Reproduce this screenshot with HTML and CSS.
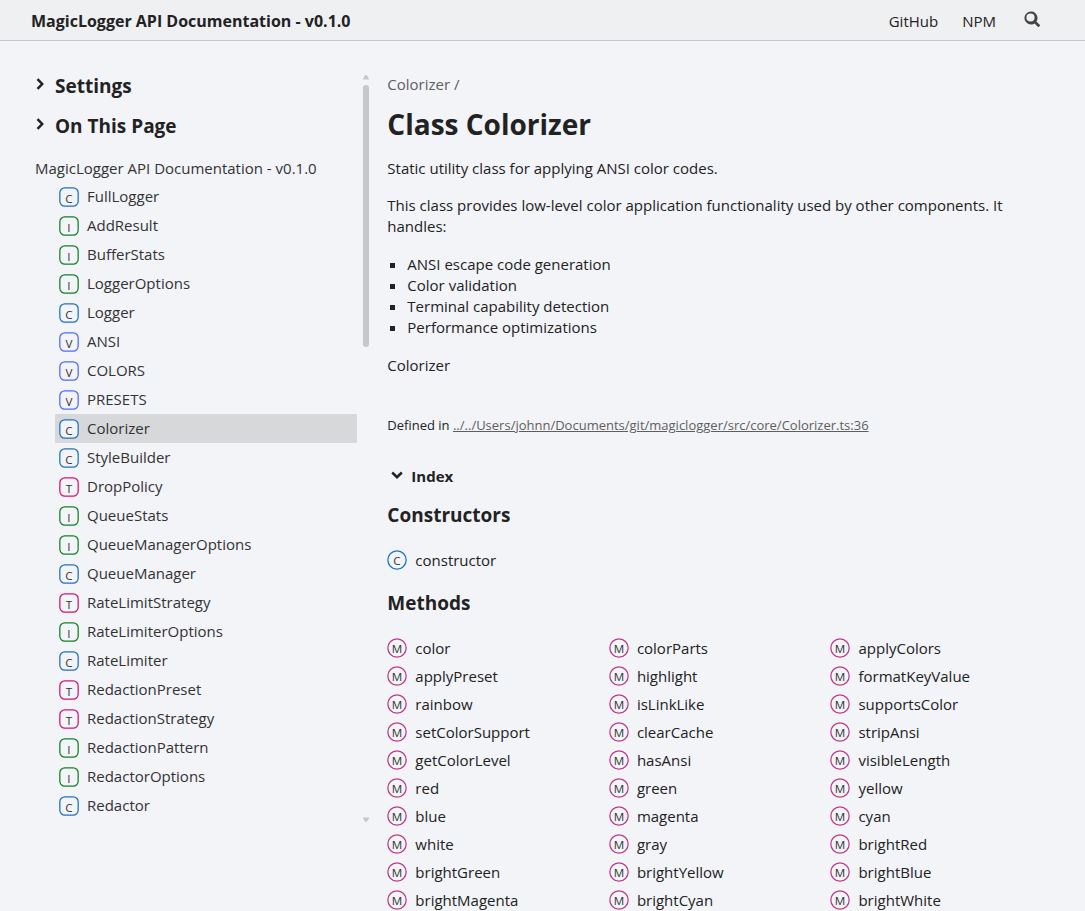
FILE: index.html
```html
<!DOCTYPE html>
<html lang="en">
<head>
    <meta charset="utf-8" />
    <meta name="viewport" content="width=device-width, initial-scale=1" />
    <title>Colorizer | MagicLogger API Documentation - v0.1.0</title>
    <link rel="stylesheet" href="styles.css">
</head>
<body>
    <svg class="sprites" aria-hidden="true">
        <symbol id="icon-class" viewBox="0 0 24 24">
            <rect class="stroke-class" x="1" y="1" width="22" height="22" rx="6" />
            <text x="12" y="19">C</text>
        </symbol>
        <symbol id="icon-interface" viewBox="0 0 24 24">
            <rect class="stroke-interface" x="1" y="1" width="22" height="22" rx="6" />
            <text x="12" y="19">I</text>
        </symbol>
        <symbol id="icon-variable" viewBox="0 0 24 24">
            <rect class="stroke-variable" x="1" y="1" width="22" height="22" rx="6" />
            <text x="12" y="19">V</text>
        </symbol>
        <symbol id="icon-type" viewBox="0 0 24 24">
            <rect class="stroke-type" x="1" y="1" width="22" height="22" rx="6" />
            <text x="12" y="19">T</text>
        </symbol>
        <symbol id="icon-constructor" viewBox="0 0 24 24">
            <circle class="stroke-class" cx="12" cy="12" r="11" />
            <text x="12" y="18">C</text>
        </symbol>
        <symbol id="icon-method" viewBox="0 0 24 24">
            <circle class="stroke-method" cx="12" cy="12" r="11" />
            <text x="12" y="18">M</text>
        </symbol>
        <symbol id="icon-chevron" viewBox="0 0 20 20">
            <path d="M5.2 6.5 L10 11.2 L14.8 6.5" />
        </symbol>
    </svg>

    <header class="toolbar">
        <a class="title" href="index.html">MagicLogger API Documentation - v0.1.0</a>
        <nav class="toolbar-links">
            <a href="#github">GitHub</a>
            <a href="#npm">NPM</a>
            <button class="search" type="button" aria-label="Search">
                <svg width="16" height="16" viewBox="0 0 16 16"><path d="M15.7 13.8 12.4 10.6A6.5 6.5 0 1 0 10.6 12.4L13.8 15.7A.8.8 0 0 0 15 15.7L15.7 15A.8.8 0 0 0 15.7 13.8ZM6.5 10.6A4.1 4.1 0 1 1 6.5 2.4A4.1 4.1 0 0 1 6.5 10.6Z" /></svg>
            </button>
        </nav>
    </header>

    <div class="container">
        <aside class="sidebar">
            <div class="sidebar-content">
                <details>
                    <summary><svg class="chevron"><use href="#icon-chevron" /></svg><h3>Settings</h3></summary>
                </details>
                <details>
                    <summary><svg class="chevron"><use href="#icon-chevron" /></svg><h3>On This Page</h3></summary>
                </details>

                <nav class="site-menu">
                    <a class="root" href="modules.html">MagicLogger API Documentation - v0.1.0</a>
                    <ul>
                        <li><a href="#FullLogger"><svg class="icon"><use href="#icon-class" /></svg>FullLogger</a></li>
                        <li><a href="#AddResult"><svg class="icon"><use href="#icon-interface" /></svg>AddResult</a></li>
                        <li><a href="#BufferStats"><svg class="icon"><use href="#icon-interface" /></svg>BufferStats</a></li>
                        <li><a href="#LoggerOptions"><svg class="icon"><use href="#icon-interface" /></svg>LoggerOptions</a></li>
                        <li><a href="#Logger"><svg class="icon"><use href="#icon-class" /></svg>Logger</a></li>
                        <li><a href="#ANSI"><svg class="icon"><use href="#icon-variable" /></svg>ANSI</a></li>
                        <li><a href="#COLORS"><svg class="icon"><use href="#icon-variable" /></svg>COLORS</a></li>
                        <li><a href="#PRESETS"><svg class="icon"><use href="#icon-variable" /></svg>PRESETS</a></li>
                        <li><a class="current" href="#Colorizer"><svg class="icon"><use href="#icon-class" /></svg>Colorizer</a></li>
                        <li><a href="#StyleBuilder"><svg class="icon"><use href="#icon-class" /></svg>StyleBuilder</a></li>
                        <li><a href="#DropPolicy"><svg class="icon"><use href="#icon-type" /></svg>DropPolicy</a></li>
                        <li><a href="#QueueStats"><svg class="icon"><use href="#icon-interface" /></svg>QueueStats</a></li>
                        <li><a href="#QueueManagerOptions"><svg class="icon"><use href="#icon-interface" /></svg>QueueManagerOptions</a></li>
                        <li><a href="#QueueManager"><svg class="icon"><use href="#icon-class" /></svg>QueueManager</a></li>
                        <li><a href="#RateLimitStrategy"><svg class="icon"><use href="#icon-type" /></svg>RateLimitStrategy</a></li>
                        <li><a href="#RateLimiterOptions"><svg class="icon"><use href="#icon-interface" /></svg>RateLimiterOptions</a></li>
                        <li><a href="#RateLimiter"><svg class="icon"><use href="#icon-class" /></svg>RateLimiter</a></li>
                        <li><a href="#RedactionPreset"><svg class="icon"><use href="#icon-type" /></svg>RedactionPreset</a></li>
                        <li><a href="#RedactionStrategy"><svg class="icon"><use href="#icon-type" /></svg>RedactionStrategy</a></li>
                        <li><a href="#RedactionPattern"><svg class="icon"><use href="#icon-interface" /></svg>RedactionPattern</a></li>
                        <li><a href="#RedactorOptions"><svg class="icon"><use href="#icon-interface" /></svg>RedactorOptions</a></li>
                        <li><a href="#Redactor"><svg class="icon"><use href="#icon-class" /></svg>Redactor</a></li>
                    </ul>
                </nav>
            </div>
            <div class="scrollbar" aria-hidden="true">
                <svg width="8" height="6" viewBox="0 0 8 6"><path d="M1 5.5 V4.5 L3.5 1 H4.5 L7 4.5 V5.5 Z" /></svg>
                <div class="track"><div class="thumb"></div></div>
                <svg width="8" height="6" viewBox="0 0 8 6"><path d="M1 .5 V1.5 L3.5 5 H4.5 L7 1.5 V.5 Z" /></svg>
            </div>
        </aside>

        <main class="content">
            <div class="breadcrumb"><a href="#Colorizer">Colorizer</a> /</div>
            <h1>Class Colorizer</h1>

            <section class="comment">
                <p>Static utility class for applying ANSI color codes.</p>
                <p>This class provides low-level color application functionality used by other components. It handles:</p>
                <ul>
                    <li>ANSI escape code generation</li>
                    <li>Color validation</li>
                    <li>Terminal capability detection</li>
                    <li>Performance optimizations</li>
                </ul>
                <p>Colorizer</p>
            </section>

            <p class="sources">Defined in <a href="#source">../../Users/johnn/Documents/git/magiclogger/src/core/Colorizer.ts:36</a></p>

            <details class="index" open>
                <summary><svg class="chevron"><use href="#icon-chevron" /></svg><h5>Index</h5></summary>

                <h3>Constructors</h3>
                <div class="index-list">
                    <a href="#constructor"><svg class="icon"><use href="#icon-constructor" /></svg>constructor</a>
                </div>

                <h3>Methods</h3>
                <div class="index-list">
                    <a href="#color"><svg class="icon"><use href="#icon-method" /></svg>color</a>
                    <a href="#colorParts"><svg class="icon"><use href="#icon-method" /></svg>colorParts</a>
                    <a href="#applyColors"><svg class="icon"><use href="#icon-method" /></svg>applyColors</a>
                    <a href="#applyPreset"><svg class="icon"><use href="#icon-method" /></svg>applyPreset</a>
                    <a href="#highlight"><svg class="icon"><use href="#icon-method" /></svg>highlight</a>
                    <a href="#formatKeyValue"><svg class="icon"><use href="#icon-method" /></svg>formatKeyValue</a>
                    <a href="#rainbow"><svg class="icon"><use href="#icon-method" /></svg>rainbow</a>
                    <a href="#isLinkLike"><svg class="icon"><use href="#icon-method" /></svg>isLinkLike</a>
                    <a href="#supportsColor"><svg class="icon"><use href="#icon-method" /></svg>supportsColor</a>
                    <a href="#setColorSupport"><svg class="icon"><use href="#icon-method" /></svg>setColorSupport</a>
                    <a href="#clearCache"><svg class="icon"><use href="#icon-method" /></svg>clearCache</a>
                    <a href="#stripAnsi"><svg class="icon"><use href="#icon-method" /></svg>stripAnsi</a>
                    <a href="#getColorLevel"><svg class="icon"><use href="#icon-method" /></svg>getColorLevel</a>
                    <a href="#hasAnsi"><svg class="icon"><use href="#icon-method" /></svg>hasAnsi</a>
                    <a href="#visibleLength"><svg class="icon"><use href="#icon-method" /></svg>visibleLength</a>
                    <a href="#red"><svg class="icon"><use href="#icon-method" /></svg>red</a>
                    <a href="#green"><svg class="icon"><use href="#icon-method" /></svg>green</a>
                    <a href="#yellow"><svg class="icon"><use href="#icon-method" /></svg>yellow</a>
                    <a href="#blue"><svg class="icon"><use href="#icon-method" /></svg>blue</a>
                    <a href="#magenta"><svg class="icon"><use href="#icon-method" /></svg>magenta</a>
                    <a href="#cyan"><svg class="icon"><use href="#icon-method" /></svg>cyan</a>
                    <a href="#white"><svg class="icon"><use href="#icon-method" /></svg>white</a>
                    <a href="#gray"><svg class="icon"><use href="#icon-method" /></svg>gray</a>
                    <a href="#brightRed"><svg class="icon"><use href="#icon-method" /></svg>brightRed</a>
                    <a href="#brightGreen"><svg class="icon"><use href="#icon-method" /></svg>brightGreen</a>
                    <a href="#brightYellow"><svg class="icon"><use href="#icon-method" /></svg>brightYellow</a>
                    <a href="#brightBlue"><svg class="icon"><use href="#icon-method" /></svg>brightBlue</a>
                    <a href="#brightMagenta"><svg class="icon"><use href="#icon-method" /></svg>brightMagenta</a>
                    <a href="#brightCyan"><svg class="icon"><use href="#icon-method" /></svg>brightCyan</a>
                    <a href="#brightWhite"><svg class="icon"><use href="#icon-method" /></svg>brightWhite</a>
                </div>
            </details>
        </main>
    </div>
</body>
</html>
```
FILE: styles.css
```css
:root {
    --background: #f2f4f8;
    --background-secondary: #eff0f1;
    --active-item: #d6d8da;
    --accent: #c5c7c9;
    --text: #222;
    --text-aside: #5e5e5e;
}

* {
    box-sizing: border-box;
}

body {
    margin: 0;
    background: var(--background);
    color: var(--text);
    font-family: "Segoe UI", "Open Sans", "Noto Sans", sans-serif;
    font-size: 15px;
    line-height: 21px;
}

a {
    color: inherit;
    text-decoration: none;
}

h1, h3, h5, p, ul {
    margin: 0;
    padding: 0;
}

h3 {
    font-size: 19px;
    line-height: 24px;
}

summary {
    display: flex;
    align-items: flex-start;
    gap: 4px;
    margin-bottom: 16px;
    list-style: none;
    cursor: pointer;
}

summary::-webkit-details-marker {
    display: none;
}

/* icons */
.sprites {
    display: none;
}

.icon {
    flex: none;
    width: 20px;
    height: 20px;
    margin-right: 8px;
}

symbol rect,
symbol circle {
    fill: var(--background);
    stroke-width: 1.5;
}

symbol text {
    fill: #333;
    font-size: 14px;
    text-anchor: middle;
}

.stroke-class { stroke: #1f70c2; }
.stroke-interface { stroke: #108024; }
.stroke-variable { stroke: #4d68ff; }
.stroke-type { stroke: #d51270; }
.stroke-method { stroke: #be3989; }

.chevron {
    flex: none;
    width: 20px;
    height: 20px;
    fill: none;
    stroke: var(--text);
    stroke-width: 2.5;
}

details:not([open]) .chevron {
    transform: rotate(-90deg);
}

/* header */
.toolbar {
    display: flex;
    align-items: center;
    justify-content: space-between;
    height: 41px;
    padding: 2px 33px 0 31px;
    background: var(--background-secondary);
    border-bottom: 1px solid var(--accent);
}

.title {
    font-size: 16px;
    font-weight: bold;
}

.toolbar-links {
    display: flex;
    align-items: center;
    gap: 24px;
}

.search {
    display: flex;
    padding: 0 12px 4px 4px;
    border: none;
    background: none;
    fill: #444;
    cursor: pointer;
}

/* page */
.container {
    display: grid;
    grid-template-columns: minmax(0, 1fr) minmax(0, 2fr);
    padding: 33px 33px 0 31px;
}

.sidebar {
    display: flex;
    align-items: flex-start;
    gap: 4px;
}

.sidebar-content {
    flex: 1;
    min-width: 0;
}

.site-menu {
    padding: 4px 0 0 4px;
    color: #333;
}

.site-menu ul {
    margin: 3px 0 0 20px;
    list-style: none;
}

.site-menu li a {
    display: flex;
    align-items: center;
    height: 29px;
    padding: 0 4px;
}

.site-menu .current {
    background: var(--active-item);
}

.scrollbar {
    display: flex;
    flex-direction: column;
    align-items: center;
    gap: 5px;
    width: 10px;
    height: 749px;
    fill: var(--accent);
}

.track {
    flex: 1;
    width: 6px;
}

.thumb {
    height: 36%;
    border-radius: 3px;
    background: var(--accent);
}

.content {
    padding-left: 16px;
}

.breadcrumb {
    color: var(--text-aside);
}

h1 {
    margin: 9px 0 14px;
    font-size: 28px;
    line-height: 40px;
}

.comment p {
    margin-bottom: 16px;
}

.comment ul {
    margin: 17px 0;
    padding-left: 20px;
    list-style: square;
}

.sources {
    margin: 39px 0 30px;
    font-size: 13px;
}

.sources a {
    color: var(--text-aside);
    text-decoration: underline;
}

.index h5 {
    font-size: 15px;
}

.index-list {
    display: grid;
    grid-template-columns: repeat(3, 1fr);
    gap: 8px 0;
    margin: 23px 0 21px;
}

.index-list a {
    display: flex;
    align-items: center;
    height: 20px;
}
```
